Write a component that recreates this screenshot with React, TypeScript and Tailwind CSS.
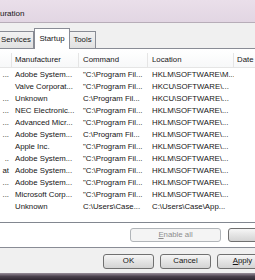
const rows: [string, string, string, string][] = [
  ["...", "Adobe System...", '"C:\\Program Fil...', "HKLM\\SOFTWARE\\M..."],
  ["", "Valve Corporat...", '"C:\\Program Fil...', "HKCU\\SOFTWARE\\..."],
  ["...", "Unknown", "C:\\Program Fil...", "HKCU\\SOFTWARE\\..."],
  ["...", "NEC Electronic...", '"C:\\Program Fil...', "HKLM\\SOFTWARE\\..."],
  ["...", "Advanced Micr...", '"C:\\Program Fil...', "HKLM\\SOFTWARE\\..."],
  ["...", "Adobe System...", "C:\\Program Fil...", "HKLM\\SOFTWARE\\..."],
  ["", "Apple Inc.", '"C:\\Program Fil...', "HKLM\\SOFTWARE\\..."],
  ["..", "Adobe System...", '"C:\\Program Fil...', "HKLM\\SOFTWARE\\..."],
  ["at", "Adobe System...", '"C:\\Program Fil...', "HKLM\\SOFTWARE\\..."],
  ["...", "Adobe System...", '"C:\\Program Fil...', "HKLM\\SOFTWARE\\..."],
  ["...", "Microsoft Corp...", '"C:\\Program Fil...', "HKLM\\SOFTWARE\\..."],
  ["", "Unknown", "C:\\Users\\Case...", "C:\\Users\\Case\\App..."],
];

function Btn({ children, className }: { children?: React.ReactNode; className?: string }) {
  return (
    <div
      className={
        "flex items-center justify-center rounded-[3px] border border-[#707070] bg-gradient-to-b from-[#f6f6f6] via-[#e4e4e4] to-[#d4d4d4] text-[7.8px] leading-none " +
        (className ?? "")
      }
    >
      {children}
    </div>
  );
}

export default function App() {
  return (
    <div className="w-[255px] h-[280px] overflow-hidden bg-[#f0f0f0] flex flex-col text-[#151515] font-['Liberation_Sans',Arial,sans-serif] text-[7.8px] leading-none">
      {/* title bar */}
      <div className="h-[23px] shrink-0 bg-gradient-to-b from-[#eadfea] to-[#e2d6e3] border-b border-[#b7adb8] flex items-center pt-[5px]">
        <span className="text-[8px]">uration</span>
      </div>
      {/* tabs */}
      <div className="h-[25px] shrink-0 flex items-end relative z-10">
        <div className="ml-[-5px] w-[39px] h-[17px] border border-b-0 border-[#898c95] bg-gradient-to-b from-[#f2f2f2] to-[#e1e1e1] flex items-center justify-center pl-[3px]">
          Services
        </div>
        <div className="w-[36px] h-[21px] border border-b-0 border-[#898c95] bg-white flex items-center justify-center mb-[-1px] pb-[1px]">
          Startup
        </div>
        <div className="w-[26px] h-[17px] border border-b-0 border-l-0 border-[#898c95] bg-gradient-to-b from-[#f2f2f2] to-[#e1e1e1] flex items-center justify-center">
          Tools
        </div>
      </div>
      {/* panel */}
      <div className="h-[200px] shrink-0 bg-white border-t border-b border-[#898c95] flex flex-col pt-[1px]">
        {/* listview */}
        <div className="h-[173px] shrink-0 border-b border-[#828790] flex flex-col">
          <div className="h-[18px] shrink-0 flex bg-gradient-to-b from-white to-[#f7f8f9] border-b border-[#e5e5e5] pt-[3px]">
            <div className="w-[12px] shrink-0 border-r border-[#e5e5e5]" />
            <div className="w-[67px] shrink-0 border-r border-[#e5e5e5] flex items-center pl-[3px]">Manufacturer</div>
            <div className="w-[69px] shrink-0 border-r border-[#e5e5e5] flex items-center pl-[4px]">Command</div>
            <div className="w-[86px] shrink-0 border-r border-[#e5e5e5] flex items-center pl-[4px]">Location</div>
            <div className="flex-1 flex items-center pl-[3px]">Date</div>
          </div>
          <div className="flex flex-col pt-[1px]">
            {rows.map((r, i) => (
              <div key={i} className="h-[12px] flex items-center">
                <div className="w-[12px] shrink-0 text-right pr-[3px] overflow-hidden whitespace-nowrap">{r[0]}</div>
                <div className="w-[67px] shrink-0 pl-[3px] whitespace-nowrap overflow-hidden">{r[1]}</div>
                <div className="w-[69px] shrink-0 pl-[4px] whitespace-nowrap overflow-hidden">{r[2]}</div>
                <div className="w-[86px] shrink-0 pl-[4px] whitespace-nowrap overflow-hidden">{r[3]}</div>
              </div>
            ))}
          </div>
        </div>
        <div className="flex mt-[5px] pl-[130px] gap-[7px]">
          <div className="w-[91px] h-[14px] shrink-0 rounded-[3px] border border-[#b1b5b9] bg-[#f4f4f4] text-[#8d8d8d] flex items-center justify-center">
            <span>
              <span className="underline">E</span>nable all
            </span>
          </div>
          <Btn className="w-[60px] h-[14px] shrink-0" />
        </div>
      </div>
      {/* bottom buttons */}
      <div className="h-[25px] shrink-0 flex items-center pl-[103px] gap-[6px] pt-[1px]">
        <Btn className="w-[51px] h-[15px] shrink-0">OK</Btn>
        <Btn className="w-[51px] h-[15px] shrink-0">Cancel</Btn>
        <Btn className="w-[51px] h-[15px] shrink-0">
          <span>
            <span className="underline">A</span>pply
          </span>
        </Btn>
      </div>
      <div className="flex-1 bg-gradient-to-b from-[#9a909c] via-[#4a414d] to-[#2f2832]" />
    </div>
  );
}
